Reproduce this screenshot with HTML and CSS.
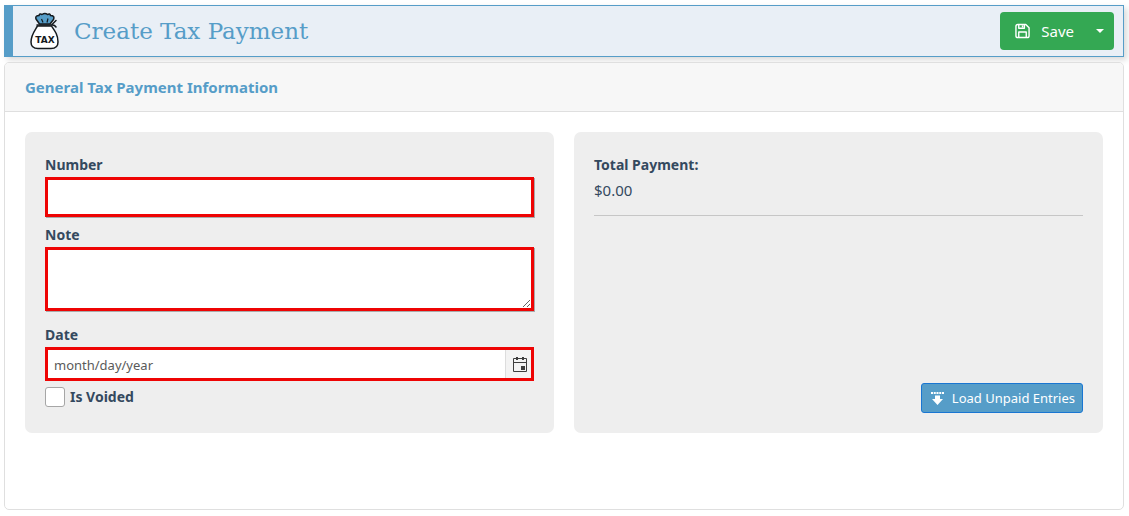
FILE: index.html
```
<!DOCTYPE html>
<html lang="en">
<head>
<meta charset="utf-8">
<meta name="viewport" content="width=device-width, initial-scale=1">
<title>Create Tax Payment</title>
<link rel="stylesheet" href="styles.css">
</head>
<body>
<form class="page">
  <header class="page-header">
    <svg class="tax-icon" viewBox="0 0 30 38" aria-hidden="true">
      <path d="M9.500 12 6 7Q5 3.500 9 3.500Q9.500 1 12 2.500Q15 .5 17.500 2.500Q20 1 20.500 3.500Q25 3.500 23.500 7.500L20 12Z" fill="#569dc8" stroke="#151a1e" stroke-width="1.500" stroke-linejoin="round"/>
      <path d="M11.500 7l1.500 3.500M18 6.500 17 10.500" stroke="#151a1e" stroke-width="1.200"/>
      <path d="M7.500 14C4.500 19 1 23 1 30Q1 36.500 8 36.500H21Q28 36.500 28 30C28 23 25 19 21.500 14Z" fill="#fff" stroke="#151a1e" stroke-width="1.500"/>
      <path d="M7 13H21.500L26 8.500M21.500 13Q24.500 12.500 26 15" fill="none" stroke="#151a1e" stroke-width="1.500" stroke-linecap="round" stroke-linejoin="round"/>
      <text class="tax-icon-text" x="15" y="31" text-anchor="middle">TAX</text>
    </svg>
    <h1 class="page-title">Create Tax Payment</h1>
    <div class="save-group">
      <button class="save-button" type="button">
        <svg class="save-icon" viewBox="0 0 16 16" aria-hidden="true"><path d="M3 1h8.500L15 4.500V13q0 2-2 2H3q-2 0-2-2V3q0-2 2-2ZM4 1v4h6V1M4 15V9h8v6M8 2v2" fill="none" stroke="currentColor" stroke-width="1.500" stroke-linejoin="round"/></svg>
        <span>Save</span>
      </button>
      <button class="save-menu" type="button" aria-label="More save options"><span class="caret"></span></button>
    </div>
  </header>
  <section class="card">
    <h2 class="card-header">General Tax Payment Information</h2>
    <div class="card-body">
      <div class="panel">
        <label class="label" for="number">Number</label>
        <input class="field number-field" id="number" type="text">
        <label class="label" for="note">Note</label>
        <textarea class="field note-field" id="note"></textarea>
        <label class="label" for="date">Date</label>
        <div class="date-field">
          <input class="date-input" id="date" type="text" placeholder="month/day/year">
          <button class="date-button" type="button" aria-label="Open calendar">
            <svg class="calendar-icon" viewBox="0 0 14 15" aria-hidden="true"><path d="M.5 1.500h13v13H.5ZM.5 5.500h13" fill="none" stroke="#3d3d3d"/><path d="M3 0h2v3H3ZM9 0h2v3H9ZM8 9h4v4H8Z" fill="#3d3d3d"/></svg>
          </button>
        </div>
        <div class="check-row">
          <input class="checkbox" id="voided" type="checkbox">
          <label class="check-label" for="voided">Is Voided</label>
        </div>
      </div>
      <div class="panel">
        <div class="total">
          <div class="label">Total Payment:</div>
          <div class="total-value">$0.00</div>
        </div>
        <button class="load-button" type="button">
          <svg class="load-icon" viewBox="0 0 13 13" aria-hidden="true"><path d="M0 1h13" stroke="currentColor" stroke-width="2" stroke-dasharray="2 .75"/><path d="M4 3.500h5V7h3l-5.500 6L1 7h3Z" fill="currentColor"/></svg>
          <span>Load Unpaid Entries</span>
        </button>
      </div>
    </div>
  </section>
</form>
</body>
</html>
```

FILE: styles.css
```
* { box-sizing: border-box; }

body {
  margin: 0;
  background: #fff;
  color: #34495e;
  font: 15px/26px "Noto Sans", "Open Sans", sans-serif;
}

button, input, textarea { font: inherit; }

.page {
  display: flex;
  flex-direction: column;
  gap: 5px;
  min-height: 100vh;
  padding: 5px 5px 6px 4px;
}

.page-header {
  display: flex;
  align-items: center;
  min-height: 52px;
  padding: 0 9px 0 17px;
  border: 1px solid #569dc8;
  border-left-width: 9px;
  background: #e9eff6;
  box-shadow: 3px 3px 6px rgba(0, 0, 0, 0.15);
}

.tax-icon { width: 30px; height: 38px; flex: none; }

.tax-icon-text { font: 700 9px "DejaVu Sans", sans-serif; fill: #151a1e; }

.page-title {
  flex: 1;
  margin: 0 0 0 14px;
  color: #569dc8;
  font: 400 23px/32px "DejaVu Serif", serif;
}

.save-group {
  display: flex;
  height: 38px;
  border-radius: 4px;
  background: #34a853;
  overflow: hidden;
}

.save-button, .save-menu {
  display: flex;
  align-items: center;
  border: 0;
  background: none;
  color: #fff;
}

.save-button { gap: 11px; padding: 0 12px 0 15px; }

.save-icon { width: 15px; height: 16px; }

.save-menu { justify-content: center; width: 28px; padding: 0; }

.caret {
  border: 4px solid transparent;
  border-top-color: #fff;
  border-bottom: 0;
}

.card {
  flex: 1;
  border: 1px solid #dfdfdf;
  border-radius: 5px;
  background: #fff;
  overflow: hidden;
}

.card-header {
  margin: 0;
  padding: 11px 20px;
  border-bottom: 1px solid #dfdfdf;
  background: #f7f7f7;
  color: #569dc8;
  font-size: 15px;
  font-weight: 700;
}

.card-body {
  display: grid;
  grid-template-columns: 1fr 1fr;
  gap: 20px;
  padding: 20px;
}

.panel {
  display: flex;
  flex-direction: column;
  padding: 20px;
  border-radius: 7px;
  background: #eee;
}

.label, .check-label { font-size: 14px; font-weight: 700; }

.label { line-height: 25px; }

.field, .date-field {
  width: 100%;
  border: 3px solid #ee0404;
  background: #fff;
}

.field { padding: 4px 6px; box-shadow: 1px 1px 0 #aaa; }

.number-field { height: 40px; margin-bottom: 5px; }

.note-field { height: 64px; margin-bottom: 11px; resize: vertical; }

.date-field { display: flex; height: 34px; margin-bottom: 6px; }

.date-input {
  flex: 1;
  min-width: 0;
  padding: 2px 6px 0;
  border: 0;
  background: none;
  color: #5a5a5a;
  font-size: 13px;
}

.date-input::placeholder { color: #5a5a5a; opacity: 1; }

.date-button {
  display: flex;
  align-items: center;
  justify-content: flex-end;
  width: 26px;
  padding: 0 4px 0 0;
  border: 0;
  border-left: 1px solid #ddd;
  background: #f3f3f3;
}

.calendar-icon { width: 14px; height: 15px; }

.check-row {
  display: flex;
  align-items: center;
  gap: 5px;
  height: 20px;
  margin-bottom: 6px;
}

.checkbox {
  appearance: none;
  width: 20px;
  height: 20px;
  margin: 0;
  border: 1px solid #a6a6a6;
  border-radius: 3px;
  background: #fff;
}

.checkbox:checked { background: #569dc8; }

.total { padding-bottom: 12px; border-bottom: 1px solid #c6c6c6; }

.load-button {
  display: flex;
  align-items: center;
  align-self: flex-end;
  gap: 8px;
  height: 30px;
  margin-top: auto;
  padding: 0 7px 0 9px;
  border: 1px solid #1976d2;
  border-radius: 3px;
  background: #569dc8;
  color: #fff;
  font-size: 13px;
}

.load-icon { width: 13px; height: 13px; }
```
